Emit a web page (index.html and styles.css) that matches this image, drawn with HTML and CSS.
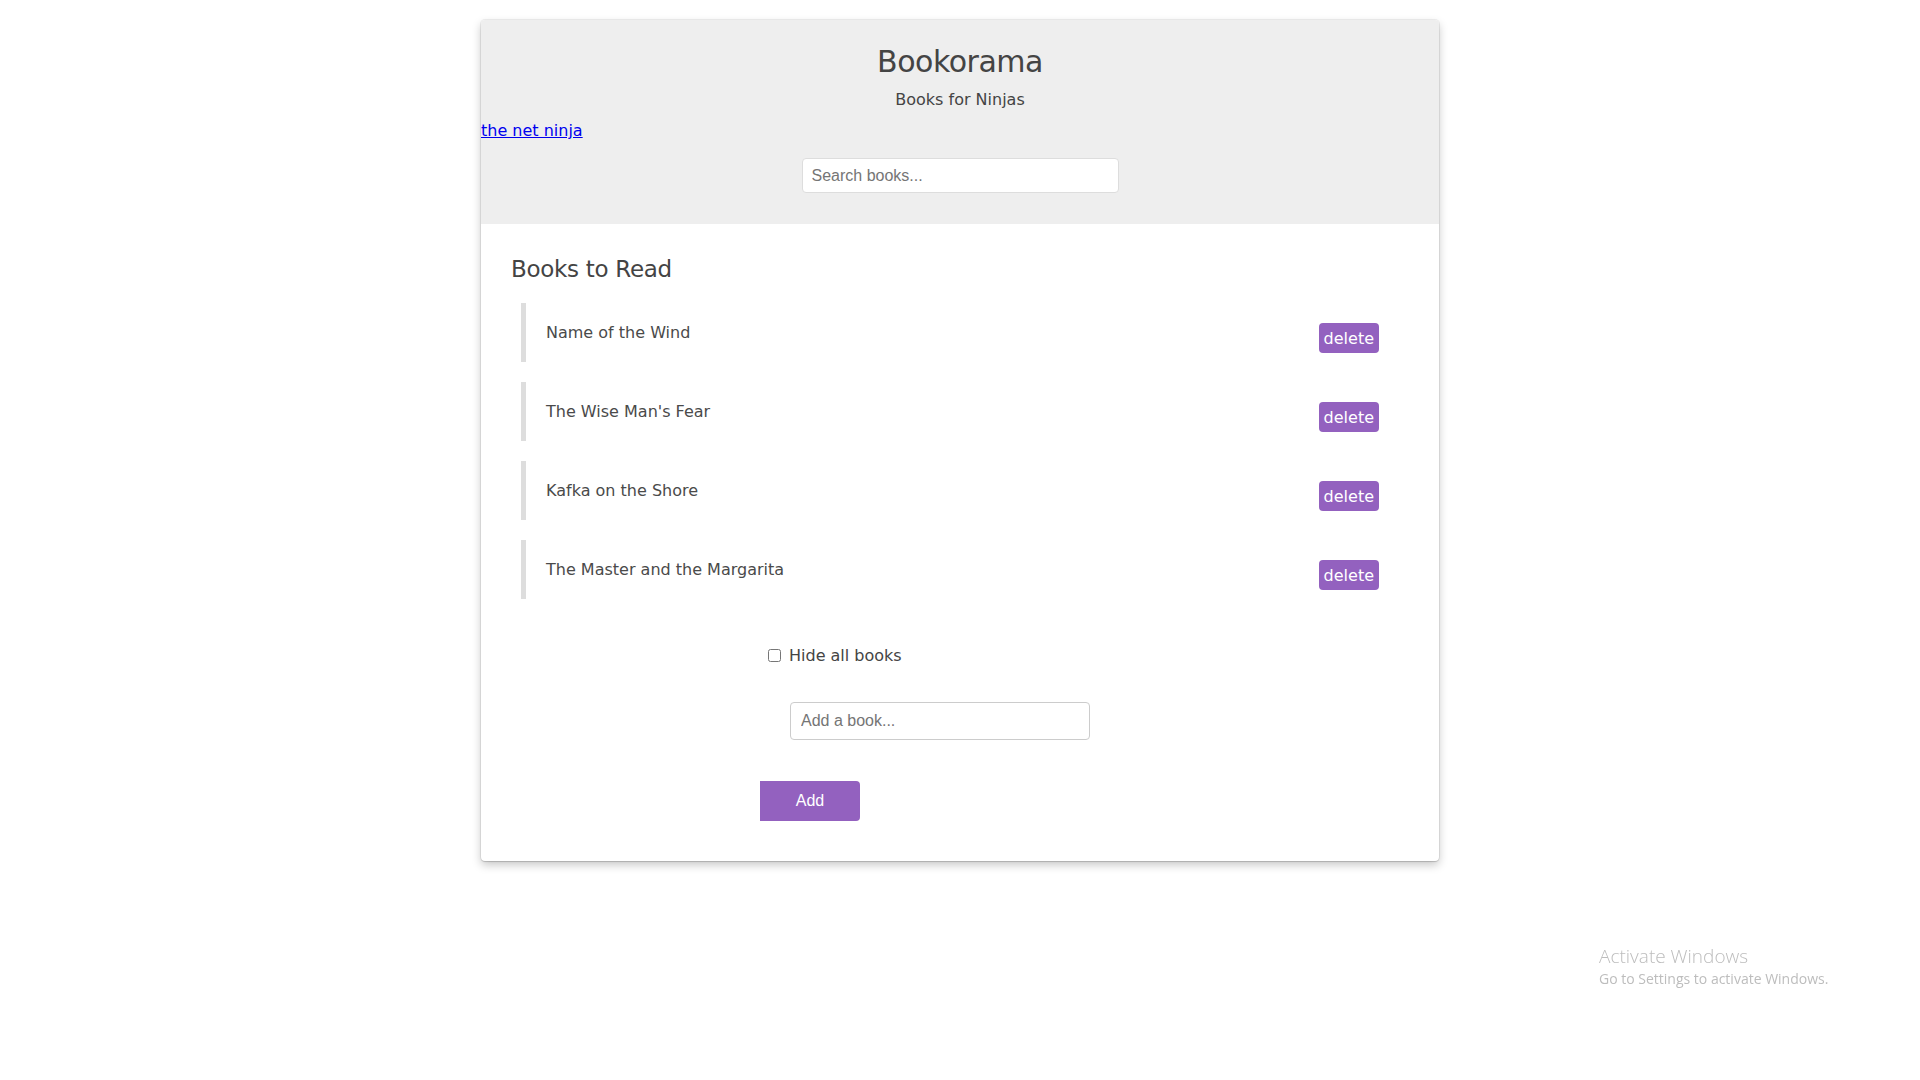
FILE: index.html
```html
<!DOCTYPE html>
<html lang="en">
<head>
<meta charset="utf-8">
<title>Bookorama</title>
<link rel="stylesheet" href="styles.css">
</head>
<body>
<div class="wrapper">
  <header class="page-banner">
    <h1 class="title">Bookorama</h1>
    <p class="subtitle">Books for Ninjas</p>
    <div class="link-row"><a href="#">the net ninja</a></div>
    <form class="search-books">
      <input type="text" class="search-input" placeholder="Search books...">
    </form>
  </header>
  <section class="book-list">
    <h2 class="list-title">Books to Read</h2>
    <ul class="books">
      <li class="book"><button class="delete">delete</button><span class="name">Name of the Wind</span></li>
      <li class="book"><button class="delete">delete</button><span class="name">The Wise Man's Fear</span></li>
      <li class="book"><button class="delete">delete</button><span class="name">Kafka on the Shore</span></li>
      <li class="book"><button class="delete">delete</button><span class="name">The Master and the Margarita</span></li>
    </ul>
    <div class="hide-row">
      <input type="checkbox" id="hide" class="hide-box">
      <label for="hide" class="hide-label">Hide all books</label>
    </div>
    <form class="add-book">
      <input type="text" class="add-input" placeholder="Add a book...">
      <button type="button" class="add-btn">Add</button>
    </form>
  </section>
</div>
<div class="activate">
  <div class="act-title">Activate Windows</div>
  <div class="act-sub">Go to Settings to activate Windows.</div>
</div>
</body>
</html>
```
FILE: styles.css
```css
html, body {
  margin: 0;
  padding: 0;
  background: #fff;
}
body {
  font-family: "DejaVu Sans", Verdana, sans-serif;
  color: #444;
  padding-bottom: 40px;
}
.wrapper {
  width: 958px;
  margin: 20px auto 0;
  background: #fff;
  border-radius: 4px;
  box-shadow: 0 0 0 1px rgba(0, 0, 0, 0.06), 0 1px 1px rgba(0, 0, 0, 0.12), 0 4px 10px rgba(0, 0, 0, 0.22);
}
.page-banner {
  background: #eee;
  border-radius: 4px 4px 0 0;
  padding: 24px 0 31px;
  text-align: center;
}
.title {
  margin: 0;
  font-size: 30px;
  line-height: 36px;
  font-weight: normal;
  letter-spacing: -0.5px;
}
.subtitle {
  margin: 11px 0 0;
  font-size: 16px;
  line-height: 18px;
}
.link-row {
  margin-top: 12px;
  text-align: left;
  font-size: 16px;
  line-height: 19px;
}
.link-row a {
  color: #0000ee;
}
.search-books {
  margin: 18px 0 0;
}
.search-input {
  display: block;
  margin: 0 auto;
  width: 317px;
  height: 35px;
  box-sizing: border-box;
  border: 1px solid #ddd;
  border-radius: 4px;
  padding: 0 9px;
  font-family: "Liberation Sans", Arial, sans-serif;
  font-size: 16px;
  color: #444;
  background: #fff;
}
.search-input::placeholder,
.add-input::placeholder {
  color: #757575;
}
.book-list {
  padding: 31px 30px 40px;
}
.list-title {
  margin: 0;
  font-size: 23px;
  line-height: 28px;
  font-weight: normal;
  letter-spacing: -0.3px;
}
.books {
  list-style: none;
  margin: 20px 0 0;
  padding: 0 10px;
}
.book {
  border-left: 5px solid #ddd;
  padding: 20px;
  margin-bottom: 20px;
  font-size: 16px;
  line-height: 19px;
  color: #4a4a4a;
}
.book:last-child {
  margin-bottom: 0;
}
.delete {
  float: right;
  background: #9361bf;
  color: #fff;
  border: 0;
  border-radius: 4px;
  padding: 7px 5px 5px;
  font-family: "DejaVu Sans", Verdana, sans-serif;
  font-size: 16px;
  line-height: 18px;
  cursor: pointer;
}
.hide-row {
  display: flex;
  align-items: center;
  margin-top: 47px;
  padding-left: 257px;
  font-size: 16px;
  line-height: 19px;
}
.hide-box {
  width: 13px;
  height: 13px;
  margin: 0 8px 0 0;
}
.add-book {
  margin: 37px 0 0;
  display: flex;
  flex-direction: column;
  align-items: flex-start;
}
.add-input {
  margin-left: 279px;
  width: 300px;
  height: 38px;
  box-sizing: border-box;
  border: 1px solid #ccc;
  border-radius: 4px;
  padding: 0 10px;
  font-family: "Liberation Sans", Arial, sans-serif;
  font-size: 16px;
  color: #444;
}
.add-btn {
  margin-top: 41px;
  margin-left: 249px;
  width: 100px;
  height: 40px;
  border: 0;
  border-radius: 0 4px 4px 0;
  background: #9361bf;
  color: #fff;
  font-family: "Liberation Sans", Arial, sans-serif;
  font-size: 16px;
  line-height: 40px;
  padding: 0;
  cursor: pointer;
}
.activate {
  position: fixed;
  left: 1599px;
  top: 944px;
  color: #bdbdbd;
  font-family: "Open Sans", sans-serif;
  pointer-events: none;
}
.act-title {
  font-size: 19px;
  line-height: 24px;
  font-weight: 300;
}
.act-sub {
  font-size: 14px;
  line-height: 19px;
  margin-top: 1px;
}
```
